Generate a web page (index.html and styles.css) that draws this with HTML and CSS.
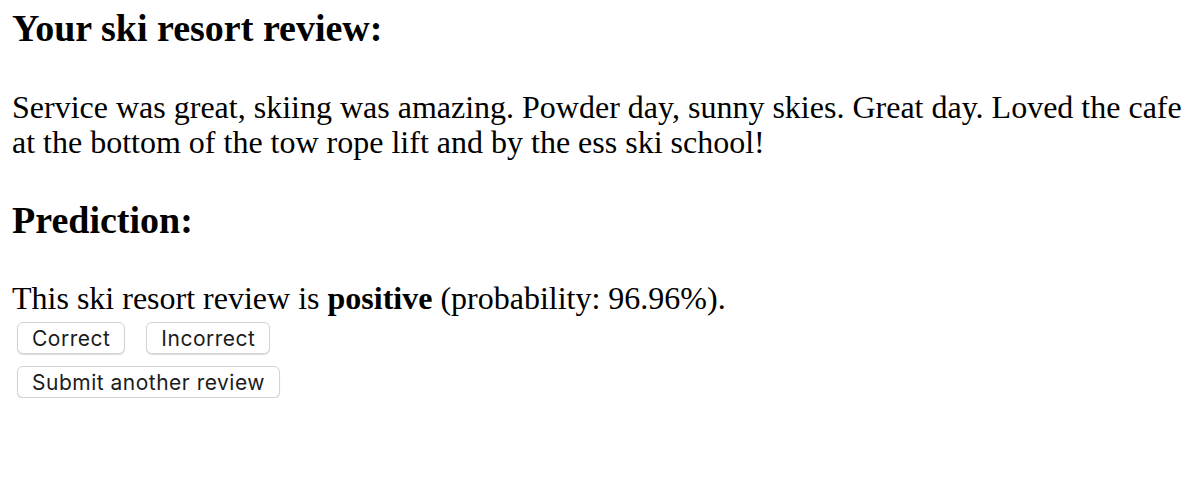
FILE: index.html
```html
<!DOCTYPE html>
<html>
<head>
<meta charset="utf-8">
<link rel="stylesheet" href="styles.css">
</head>
<body>
<main class="page">
  <h2 class="title">Your ski resort review:</h2>
  <p class="review">Service was great, skiing was amazing. Powder day, sunny skies. Great day. Loved the cafe at the bottom of the tow rope lift and by the ess ski school!</p>
  <h2 class="title title-pred">Prediction:</h2>
  <p class="result">This ski resort review is <b>positive</b> (probability: 96.96%).</p>
  <div class="actions">
    <div class="row">
      <button class="btn">Correct</button>
      <button class="btn">Incorrect</button>
    </div>
    <div class="row">
      <button class="btn">Submit another review</button>
    </div>
  </div>
</main>
</body>
</html>
```
FILE: styles.css
```css
html, body {
  margin: 0;
  padding: 0;
  background: #fff;
}
.page {
  padding: 0 12px;
  font-family: "Liberation Serif", "Times New Roman", serif;
  color: #000;
}
.title {
  font-size: 38px;
  font-weight: bold;
  margin: 0;
  padding-top: 8px;
  line-height: 41px;
}
.review {
  font-size: 32px;
  line-height: 35px;
  margin: 41px 0 0;
}
.title-pred {
  padding-top: 0;
  margin-top: 40px;
}
.result {
  font-size: 32px;
  line-height: 35px;
  margin: 40px 0 0;
}
.actions {
  display: flex;
  flex-direction: column;
  gap: 12px;
  padding-left: 5px;
  margin-top: 6px;
}
.row {
  display: flex;
  gap: 21px;
}
.btn {
  font-family: Inter, "Liberation Sans", sans-serif;
  font-size: 21px;
  letter-spacing: 0.5px;
  height: 32px;
  padding: 0 14px;
  background: #fff;
  border: 1px solid #d4d4d4;
  border-radius: 6px;
  box-shadow: 0 1px 1px rgba(0,0,0,0.14);
  color: #1c1c1c;
}
```
